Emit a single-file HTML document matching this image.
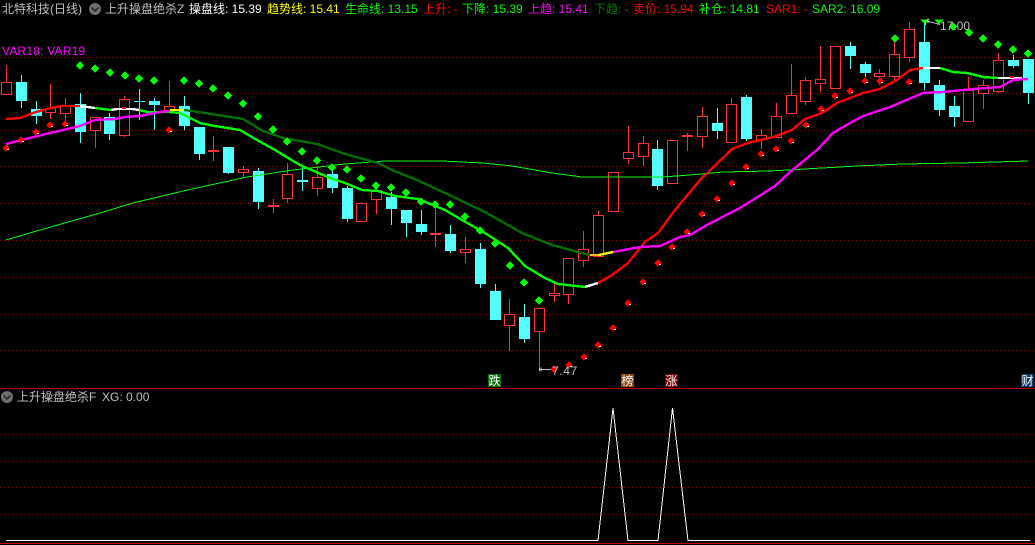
<!DOCTYPE html>
<html><head><meta charset="utf-8"><style>
html,body{margin:0;padding:0;background:#000;width:1035px;height:545px;overflow:hidden}
#w{position:relative;width:1035px;height:545px;overflow:hidden;background:#000}
svg{position:absolute;left:0;top:0}
.t{position:absolute;top:2px;white-space:nowrap;font:12px/14px "Liberation Sans","WenQuanYi Zen Hei","Noto Sans CJK SC",sans-serif}
.b{position:absolute;top:374px;width:13px;height:13px;color:#fff;text-align:center;font:12px/13px "WenQuanYi Zen Hei","Noto Sans CJK SC",sans-serif}
</style></head><body><div id="w">
<svg width="1035" height="545" viewBox="0 0 1035 545" shape-rendering="crispEdges">
<g stroke="#8c0000" stroke-dasharray="1 3" fill="none">
<path d="M0 57.5H1035M0 93.5H1035M0 130.5H1035M0 166.5H1035M0 203.5H1035M0 240.5H1035M0 277.5H1035M0 314.5H1035M0 350.5H1035M0 434.5H1035M0 461.5H1035M0 487.5H1035M0 514.5H1035"/>
</g>
<path fill="none" stroke="#ff3232" d="M6.5 65V82M1.5 82.5h10v12h-10z
M50.5 84V108M45.5 108.5h10v4h-10zM50.5 113V119
M65.5 98V105M60.5 105.5h10v8h-10zM65.5 113V122
M90.5 117.5h10v13h-10zM95.5 131V148
M124.5 96V99M119.5 99.5h10v36h-10zM124.5 136V137
M169.5 81V106M164.5 106.5h10v5h-10z
M213.5 136V161M208 150.5h11M208 151.5h11
M243.5 166V169M238.5 169.5h10v3h-10zM243.5 173V177
M273.5 199V213M268 205.5h11M268 206.5h11
M287.5 163V174M282.5 174.5h10v24h-10zM287.5 199V203
M317.5 167V177M312.5 177.5h10v11h-10zM317.5 189V196
M361.5 202V203M356.5 203.5h10v18h-10z
M376.5 188V190M371.5 190.5h10v9h-10zM376.5 200V214
M435.5 208V247M430 233.5h11M430 234.5h11
M465.5 237V249M460.5 249.5h10v3h-10zM465.5 253V263
M509.5 299V314M504.5 314.5h10v11h-10zM509.5 326V351
M534.5 308.5h10v23h-10zM539.5 332V369
M554.5 282V293M549.5 293.5h10v2h-10zM554.5 296V302
M563.5 258.5h10v36h-10zM568.5 295V304
M583.5 231V249M578.5 249.5h10v11h-10zM583.5 261V267
M598.5 211V215M593.5 215.5h10v41h-10z
M608.5 172.5h10v39h-10z
M628.5 126V152M623.5 152.5h10v6h-10zM628.5 159V164
M643.5 136V143M638.5 143.5h10v13h-10zM643.5 157V166
M667.5 140.5h10v43h-10z
M687.5 133V151M682 135.5h11M682 136.5h11
M702.5 107V116M697.5 116.5h10v20h-10zM702.5 137V148
M731.5 98V104M726.5 104.5h10v38h-10z
M761.5 129V135M756.5 135.5h10v4h-10zM761.5 140V149
M776.5 103V116M771.5 116.5h10v21h-10z
M791.5 64V95M786.5 95.5h10v18h-10z
M805.5 77V80M800.5 80.5h10v21h-10zM805.5 102V105
M820.5 46V79M815.5 79.5h10v4h-10zM820.5 84V92
M830.5 46.5h10v42h-10z
M879.5 69V73M874.5 73.5h10v3h-10zM879.5 77V85
M894.5 35V54M889.5 54.5h10v22h-10zM894.5 77V80
M909.5 22V29M904.5 29.5h10v28h-10zM909.5 58V62
M968.5 77V90M963.5 90.5h10v31h-10z
M983.5 80V85M978.5 85.5h10v8h-10zM983.5 94V109
M998.5 53V60M993.5 60.5h10v31h-10zM998.5 92V93"/>
<path fill="#54ffff" stroke="#54ffff" d="M21.5 75V82M16.5 82.5h10v18h-10zM21.5 100V108
M36.5 101V109M31.5 109.5h10v6h-10zM36.5 115V124
M80.5 93V104M75.5 104.5h10v27h-10zM80.5 132V143
M109.5 113V117M104.5 117.5h10v16h-10zM109.5 134V140
M139.5 89V120M134 101.5h11
M154.5 98V101M149.5 101.5h10v3h-10zM154.5 105V130
M184.5 96V106M179.5 106.5h10v19h-10zM184.5 126V130
M194.5 127.5h10v26h-10zM199.5 154V160
M223.5 147.5h10v25h-10zM228.5 173V174
M258.5 168V171M253.5 171.5h10v30h-10zM258.5 202V209
M302.5 166V191M297 180.5h11M297 181.5h11
M332.5 168V174M327.5 174.5h10v13h-10zM332.5 188V193
M347.5 186V188M342.5 188.5h10v30h-10zM347.5 219V222
M391.5 192V197M386.5 197.5h10v11h-10zM391.5 209V225
M401.5 210.5h10v12h-10zM406.5 223V237
M421.5 210V224M416.5 224.5h10v7h-10zM421.5 232V235
M450.5 225V234M445.5 234.5h10v16h-10zM450.5 251V253
M480.5 243V249M475.5 249.5h10v34h-10zM480.5 284V288
M495.5 284V291M490.5 291.5h10v28h-10z
M524.5 304V317M519.5 317.5h10v21h-10zM524.5 339V343
M657.5 140V149M652.5 149.5h10v36h-10zM657.5 186V190
M717.5 108V123M712.5 123.5h10v7h-10zM717.5 131V139
M746.5 95V97M741.5 97.5h10v41h-10zM746.5 139V141
M850.5 42V46M845.5 46.5h10v9h-10zM850.5 56V69
M865.5 62V64M860.5 64.5h10v8h-10zM865.5 73V77
M924.5 20V42M919.5 42.5h10v40h-10zM924.5 83V90
M939.5 80V85M934.5 85.5h10v24h-10zM939.5 110V116
M954.5 96V106M949.5 106.5h10v10h-10zM954.5 117V127
M1013.5 55V60M1008.5 60.5h10v5h-10zM1013.5 66V68
M1023.5 59.5h10v33h-10zM1028.5 93V104"/>
<g fill="none" stroke-linejoin="round">
<polyline stroke="#00ff00" points="6,240 40,230 100,213 133,203 183,191 247,177 293,170 345,164 385,161 442,161 483,163 512,166 552,173 582,177 662,177 690,175 723,172 770,171 857,166 903,164 960,163 1028,161"/>
<g stroke-width="2.4">
<polyline stroke="#006e00" points="184,110 192,111 243,119 263,131 283,138 317,144 345,154 378,163 392,170 417,180 445,193 485,212 522,233 552,245 578,252 590,255"/>
<polyline stroke="#ff0000" points="6,119 20,118 33,113 47,109 60,106 80,106"/>
<polyline stroke="#ffffff" points="80,106 95,108"/>
<polyline stroke="#00ff00" points="95,108 111,110"/>
<polyline stroke="#ffffff" points="111,110 117,109 132,109 139,110"/>
<polyline stroke="#00ff00" points="139,110 147,112 169,112 180,113 190,118 200,123 215,126 240,130 257,140 275,150 300,165 330,178 345,183 362,190 378,191 395,196 418,199 445,210 462,220 485,233 508,248 525,266 545,278 558,284 585,287"/>
<polyline stroke="#ffffff" points="585,287 598,283"/>
<polyline stroke="#ff0000" points="598,283 612,275 628,263 645,242 658,233 675,210 690,192 700,180 732,149 748,143 773,137 792,130 805,119 822,113 837,103 863,93 880,89 897,80 910,70 923,68"/>
<polyline stroke="#ffffff" points="923,68 940,68"/>
<polyline stroke="#00ff00" points="940,68 953,72 967,73 983,77 998,78"/>
<polyline stroke="#ffffff" points="998,78 1022,78"/>
<polyline stroke="#ff00ff" points="6,144 50,133 80,126 95,120 115,119 125,117 140,116 160,112 170,111"/>
<polyline stroke="#ffff00" points="170,110 184,110"/>
<polyline stroke="#ffc000" points="590,255 599,255"/>
<polyline stroke="#ffff00" points="599,255 613,252"/>
<polyline stroke="#ff00ff" points="613,252 640,247 660,246 680,237 690,235 707,225 740,208 775,186 790,172 817,150 833,133 850,123 863,116 890,107 923,93 943,92 973,89 1000,87 1013,80 1028,79"/>
</g></g>
<path fill="#00ff00" stroke="#00ff00" d="M80 62l3.500 3.500-3.500 3.500-3.500-3.500zM95 65l3.500 3.500-3.500 3.500-3.500-3.500zM110 69l3.500 3.500-3.500 3.500-3.500-3.500zM125 72l3.500 3.500-3.500 3.500-3.500-3.500zM139 75l3.500 3.500-3.500 3.500-3.500-3.500zM154 77l3.500 3.500-3.500 3.500-3.500-3.500zM184 77l3.500 3.500-3.500 3.500-3.500-3.500zM199 80l3.500 3.500-3.500 3.500-3.500-3.500zM213 85l3.500 3.500-3.500 3.500-3.500-3.500zM228 92l3.500 3.500-3.500 3.500-3.500-3.500zM243 100l3.500 3.500-3.500 3.500-3.500-3.500zM258 113l3.500 3.500-3.500 3.500-3.500-3.500zM273 126l3.500 3.500-3.500 3.500-3.500-3.500zM287 138l3.500 3.500-3.500 3.500-3.500-3.500zM302 148l3.500 3.500-3.500 3.500-3.500-3.500zM317 157l3.500 3.500-3.500 3.500-3.500-3.500zM332 164l3.500 3.500-3.500 3.500-3.500-3.500zM347 166l3.500 3.500-3.500 3.500-3.500-3.500zM361 175l3.500 3.500-3.500 3.500-3.500-3.500zM376 182l3.500 3.500-3.500 3.500-3.500-3.500zM391 184l3.500 3.500-3.500 3.500-3.500-3.500zM406 189l3.500 3.500-3.500 3.500-3.500-3.500zM421 198l3.500 3.500-3.500 3.500-3.500-3.500zM435 201l3.500 3.500-3.500 3.500-3.500-3.500zM450 201l3.500 3.500-3.500 3.500-3.500-3.500zM465 213l3.500 3.500-3.500 3.500-3.500-3.500zM480 227l3.500 3.500-3.500 3.500-3.500-3.500zM495 240l3.500 3.500-3.500 3.500-3.500-3.500zM510 262l3.500 3.500-3.500 3.500-3.500-3.500zM524 279l3.500 3.500-3.500 3.500-3.500-3.500zM539 297l3.500 3.500-3.500 3.500-3.500-3.500zM895 35l3.500 3.500-3.500 3.500-3.500-3.500zM921.500 20h7l-3.500 3.500zM935.500 20h7l-3.500 3.500zM953 23l3.500 3.500-3.500 3.500-3.500-3.500zM969 29l3.500 3.500-3.500 3.500-3.500-3.500zM983 35l3.500 3.500-3.500 3.500-3.500-3.500zM998 41l3.500 3.500-3.500 3.500-3.500-3.500zM1013 46l3.500 3.500-3.500 3.500-3.500-3.500zM1028 50l3.500 3.500-3.500 3.500-3.500-3.500z"/>
<path fill="#ff0000" stroke="#ff0000" d="M6 145l3 3-3 3-3-3zM21 137l3 3-3 3-3-3zM36 129l3 3-3 3-3-3zM50 122l3 3-3 3-3-3zM65 121l3 3-3 3-3-3zM169 127l3 3-3 3-3-3zM554 366l3 3-3 3-3-3zM569 362l3 3-3 3-3-3zM584 354l3 3-3 3-3-3zM598 342l3 3-3 3-3-3zM613 325l3 3-3 3-3-3zM628 300l3 3-3 3-3-3zM643 279l3 3-3 3-3-3zM658 260l3 3-3 3-3-3zM672 244l3 3-3 3-3-3zM687 229l3 3-3 3-3-3zM702 211l3 3-3 3-3-3zM717 196l3 3-3 3-3-3zM732 180l3 3-3 3-3-3zM746 164l3 3-3 3-3-3zM761 151l3 3-3 3-3-3zM776 146l3 3-3 3-3-3zM791 138l3 3-3 3-3-3zM806 122l3 3-3 3-3-3zM821 106l3 3-3 3-3-3zM835 93l3 3-3 3-3-3zM850 88l3 3-3 3-3-3zM865 78l3 3-3 3-3-3zM880 78l3 3-3 3-3-3zM909 79l3 3-3 3-3-3z"/>
<path fill="#ff0000" d="M122 107h4v2h-4zM1010 76h4v2h-4z"/>
<path fill="#fff" d="M7 149h2v1h-2zM22 141h2v1h-2zM37 133h2v1h-2zM51 126h2v1h-2zM66 125h2v1h-2zM170 131h2v1h-2zM570 366h2v1h-2zM585 358h2v1h-2zM599 346h2v1h-2zM614 329h2v1h-2zM629 304h2v1h-2zM644 283h2v1h-2zM659 264h2v1h-2zM673 248h2v1h-2zM688 233h2v1h-2zM703 215h2v1h-2zM718 200h2v1h-2zM733 184h2v1h-2zM747 168h2v1h-2zM762 155h2v1h-2zM777 150h2v1h-2zM792 142h2v1h-2zM807 126h2v1h-2zM822 110h2v1h-2zM836 97h2v1h-2zM851 92h2v1h-2zM866 82h2v1h-2zM881 82h2v1h-2zM910 83h2v1h-2z"/>
<path fill="none" stroke="#c0c0c0" d="M539 369.500h12M539.500 368v3M541 367.500v4M925 20.500l15 4M925.500 20v5M928 18v5"/>
<text x="552" y="375" fill="#c0c0c0" style="font:12px 'Liberation Sans',sans-serif;letter-spacing:.6px">7.47</text>
<text x="940" y="30" fill="#c0c0c0" style="font:12px 'Liberation Sans',sans-serif">17.00</text>
<path stroke="#c80000" d="M0 388.500H1035M0 543.500H1035"/>
<polyline fill="none" stroke="#ffffff" points="6,540.500 598,540.500 613,408 628,540.500 658,540.500 672.500,408 688,540.500 1030,540.500"/>
<circle cx="95" cy="9" r="6" fill="#6e6e6e" shape-rendering="auto"/>
<path d="M91.500 7.500l3.500 3.500 3.500-3.500" stroke="#222" stroke-width="1.500" fill="none" shape-rendering="auto"/>
<circle cx="7" cy="397" r="6" fill="#6e6e6e" shape-rendering="auto"/>
<path d="M3.500 395.500l3.500 3.500 3.500-3.500" stroke="#222" stroke-width="1.500" fill="none" shape-rendering="auto"/>
</svg>
<span class="t" style="left:2px;color:#c0c0c0">北特科技(日线)</span>
<span class="t" style="left:105px;color:#c0c0c0">上升操盘绝杀Z</span>
<span class="t" style="left:189px;color:#fff">操盘线: 15.39</span>
<span class="t" style="left:267px;color:#ff0">趋势线: 15.41</span>
<span class="t" style="left:345px;color:#0f0">生命线: 13.15</span>
<span class="t" style="left:423px;color:#f00">上升: -</span>
<span class="t" style="left:462px;color:#0f0">下降: 15.39</span>
<span class="t" style="left:528px;color:#f0f">上趋: 15.41</span>
<span class="t" style="left:594px;color:#007a00">下趋: -</span>
<span class="t" style="left:633px;color:#f00">卖价: 15.94</span>
<span class="t" style="left:699px;color:#0f0">补仓: 14.81</span>
<span class="t" style="left:766px;color:#f00">SAR1: -</span>
<span class="t" style="left:812px;color:#0f0">SAR2: 16.09</span>
<span class="t" style="left:2px;top:44px;color:#f0f;letter-spacing:.2px">VAR18: VAR19</span>
<span class="t" style="left:17px;top:390px;color:#c0c0c0">上升操盘绝杀F</span>
<span class="t" style="left:102px;top:390px;color:#c0c0c0">XG: 0.00</span>
<span class="b" style="left:488px;background:#0a6e0a">跌</span>
<span class="b" style="left:621px;background:#8a4a10">榜</span>
<span class="b" style="left:665px;background:#800000">涨</span>
<span class="b" style="left:1021px;background:#0a3a6a">财</span>
</div></body></html>
